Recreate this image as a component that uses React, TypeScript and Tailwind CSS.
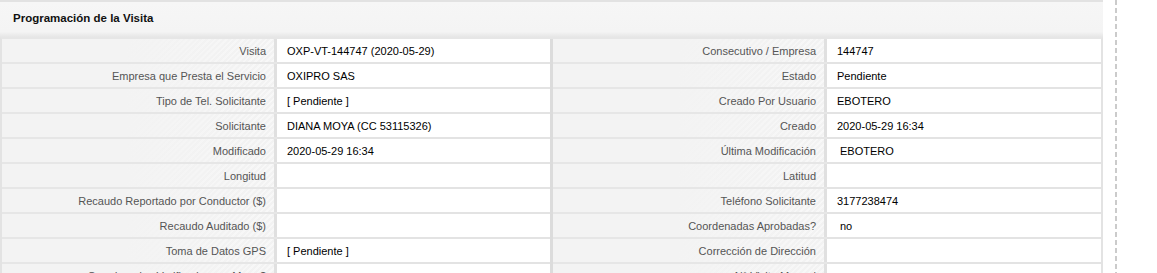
import React from "react";

type Row = { l1: string; v1: string; l2: string; v2: string; i1?: boolean; i2?: boolean };

const rows: Row[] = [
  { l1: "Visita", v1: "OXP-VT-144747 (2020-05-29)", l2: "Consecutivo / Empresa", v2: "144747" },
  { l1: "Empresa que Presta el Servicio", v1: "OXIPRO SAS", l2: "Estado", v2: "Pendiente" },
  { l1: "Tipo de Tel. Solicitante", v1: "[ Pendiente ]", l2: "Creado Por Usuario", v2: "EBOTERO" },
  { l1: "Solicitante", v1: "DIANA MOYA (CC 53115326)", l2: "Creado", v2: "2020-05-29 16:34" },
  { l1: "Modificado", v1: "2020-05-29 16:34", l2: "Última Modificación", v2: "EBOTERO", i2: true },
  { l1: "Longitud", v1: "", l2: "Latitud", v2: "" },
  { l1: "Recaudo Reportado por Conductor ($)", v1: "", l2: "Teléfono Solicitante", v2: "3177238474" },
  { l1: "Recaudo Auditado ($)", v1: "", l2: "Coordenadas Aprobadas?", v2: "no", i2: true },
  { l1: "Toma de Datos GPS", v1: "[ Pendiente ]", l2: "Corrección de Dirección", v2: "" },
  { l1: "Coordenadas Verificadas por Mapa?", v1: "", l2: "N° Visita Manual", v2: "" },
];

const labelCls =
  "h-[25px] border-b-2 border-[#e6e6e6] flex items-center justify-end pr-[11px] pt-[1px] text-[#555] bg-[linear-gradient(90deg,#f3f3f3_0%,#f3f3f3_45%,rgba(243,243,243,0)_100%),repeating-linear-gradient(135deg,#f2f2f2_0px,#f2f2f2_2px,#f8f8f8_2px,#f8f8f8_4px)] shadow-[inset_-3px_0_0_#e0e0e0] whitespace-nowrap overflow-hidden";
const valueCls =
  "h-[25px] border-b-2 border-[#e3e3e3] flex items-center pl-[10px] pt-[1px] text-black bg-white whitespace-nowrap overflow-hidden";

export default function App() {
  return (
    <div
      className="flex w-[1157px] h-[273px] overflow-hidden bg-white text-[11px]"
      style={{ fontFamily: '"Liberation Sans", Arial, sans-serif' }}
    >
      <div className="w-[1103px] shrink-0 flex flex-col">
        <div className="h-[37px] shrink-0 border-t-2 border-[#e2e2e2] bg-[linear-gradient(180deg,#f6f6f6_0%,#f4f4f4_85%,#e6e6e6_100%)] flex items-center pl-[13px] pb-[1px]">
          <span className="font-bold text-[11.5px] text-[#111]">Programación de la Visita</span>
        </div>
        <div className="border-t-2 border-[#e6e6e6] border-l-2 border-l-[#e3e3e3] border-r-2 border-r-[#e3e3e3]">
          {rows.map((r, i) => (
            <div key={i} className="flex">
              <div className={`w-[275px] ${labelCls}`}>{r.l1}</div>
              <div className={`w-[273px] ${valueCls} ${r.i1 ? "pl-[13px]" : ""}`}>{r.v1}</div>
              <div className="w-[3px] h-[25px] bg-[#dcdcdc] shadow-[1px_0_0_#ececec]" />
              <div className={`w-[274px] ${labelCls}`}>{r.l2}</div>
              <div className={`w-[274px] ${valueCls} ${r.i2 ? "pl-[13px]" : ""}`}>{r.v2}</div>
            </div>
          ))}
        </div>
      </div>
      <div className="ml-[12px] w-[2px] h-[273px] shrink-0 bg-[repeating-linear-gradient(180deg,#cbcbcb_0px,#cbcbcb_5px,transparent_5px,transparent_8px)]" />
    </div>
  );
}
